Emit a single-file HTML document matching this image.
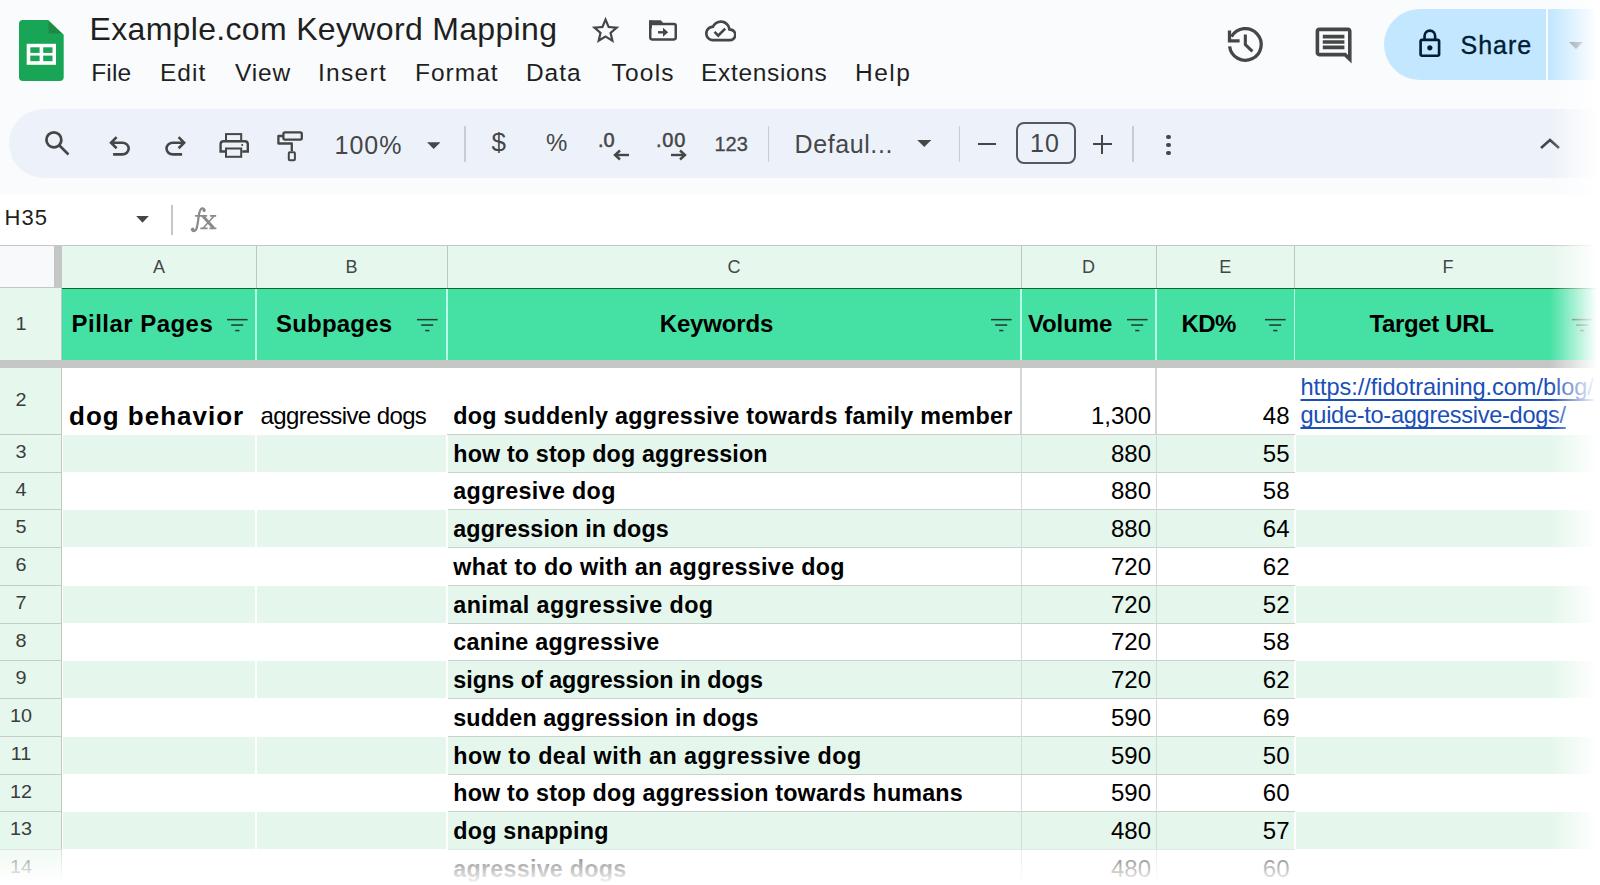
<!DOCTYPE html>
<html><head><meta charset="utf-8"><title>Example.com Keyword Mapping</title>
<style>
html,body{margin:0;padding:0;}
body{width:1600px;height:885px;overflow:hidden;position:relative;background:#f9fbfd;font-family:"Liberation Sans",sans-serif;}
.t{position:absolute;white-space:nowrap;}
.r{position:absolute;display:block;}
</style></head><body>
<svg class="r" style="left:19px;top:20px;" width="45" height="61" viewBox="0 0 45 61"><path d="M4 0H29.3L44.7 14.7V57Q44.7 61 40.7 61H4Q0 61 0 57V4Q0 0 4 0Z" fill="#18a556"/><path d="M29.6 1.5V13.5H43Z" fill="#1c8a40"/><rect x="7.7" y="23.8" width="29.3" height="21" fill="#fff"/><rect x="11.3" y="27.3" width="9.3" height="5.6" fill="#18a556"/><rect x="24.2" y="27.3" width="9.3" height="5.6" fill="#18a556"/><rect x="11.3" y="35.6" width="9.3" height="5.6" fill="#18a556"/><rect x="24.2" y="35.6" width="9.3" height="5.6" fill="#18a556"/></svg>
<div class="t" style="left:89.50px;top:13.11px;font-size:32px;line-height:32px;color:#1f1f1f;font-weight:normal;letter-spacing:0.33px;font-family:'Liberation Sans', sans-serif;">Example.com Keyword Mapping</div>
<svg class="r" style="left:588.7px;top:14px;" width="33.1" height="33.1" viewBox="0 0 24 24"><path fill="#444746" d="M22 9.24l-7.19-.62L12 2 9.19 8.63 2 9.24l5.46 4.73L5.82 21 12 17.27 18.18 21l-1.63-7.03L22 9.24zM12 15.4l-3.76 2.27 1-4.28-3.32-2.88 4.38-.38L12 6.1l1.71 4.04 4.38.38-3.32 2.88 1 4.28L12 15.4z"/></svg>
<svg class="r" style="left:645px;top:14px;" width="36" height="32" viewBox="0 0 36 32"><path fill="#444746" d="M5.5 6.2H15.8L19.8 10.9H5.5Z"/><rect x="5.25" y="9.9" width="25.5" height="15.5" rx="1.8" fill="none" stroke="#444746" stroke-width="2.5"/><rect x="4" y="6.2" width="3" height="8" fill="#444746"/><path d="M13 18.3H20" stroke="#444746" stroke-width="2.4"/><path d="M18 13.8L23.2 18.3L18 22.8Z" fill="#444746"/></svg>
<svg class="r" style="left:704.5px;top:14.6px;" width="31.7" height="31.7" viewBox="0 0 24 24"><path fill="#444746" d="M19.35 10.04C18.67 6.59 15.64 4 12 4 9.11 4 6.6 5.64 5.35 8.04 2.34 8.36 0 10.91 0 14c0 3.31 2.69 6 6 6h13c2.76 0 5-2.24 5-5 0-2.64-2.05-4.78-4.65-4.96zM19 18H6c-2.21 0-4-1.79-4-4 0-2.050 1.53-3.76 3.56-3.970l1.07-.11.5-.95C8.08 7.14 9.94 6 12 6c2.62 0 4.88 1.86 5.39 4.43l.3 1.5 1.53.11c1.56.1 2.78 1.41 2.78 2.96 0 1.65-1.35 3-3 3zm-9-3.82l-2.090-2.090L6.5 13.5 10 17l6.01-6.01-1.41-1.41z"/></svg>
<div class="t" style="left:91.30px;top:60.86px;font-size:24.5px;line-height:24.5px;color:#1f1f1f;font-weight:normal;letter-spacing:0.1px;font-family:'Liberation Sans', sans-serif;">File</div>
<div class="t" style="left:160.00px;top:60.86px;font-size:24.5px;line-height:24.5px;color:#1f1f1f;font-weight:normal;letter-spacing:1.0px;font-family:'Liberation Sans', sans-serif;">Edit</div>
<div class="t" style="left:235.00px;top:60.86px;font-size:24.5px;line-height:24.5px;color:#1f1f1f;font-weight:normal;letter-spacing:0.85px;font-family:'Liberation Sans', sans-serif;">View</div>
<div class="t" style="left:318.00px;top:60.86px;font-size:24.5px;line-height:24.5px;color:#1f1f1f;font-weight:normal;letter-spacing:1.3px;font-family:'Liberation Sans', sans-serif;">Insert</div>
<div class="t" style="left:415.00px;top:60.86px;font-size:24.5px;line-height:24.5px;color:#1f1f1f;font-weight:normal;letter-spacing:1.0px;font-family:'Liberation Sans', sans-serif;">Format</div>
<div class="t" style="left:525.90px;top:60.86px;font-size:24.5px;line-height:24.5px;color:#1f1f1f;font-weight:normal;letter-spacing:1.0px;font-family:'Liberation Sans', sans-serif;">Data</div>
<div class="t" style="left:611.60px;top:60.86px;font-size:24.5px;line-height:24.5px;color:#1f1f1f;font-weight:normal;letter-spacing:1.2px;font-family:'Liberation Sans', sans-serif;">Tools</div>
<div class="t" style="left:701.00px;top:60.86px;font-size:24.5px;line-height:24.5px;color:#1f1f1f;font-weight:normal;letter-spacing:0.67px;font-family:'Liberation Sans', sans-serif;">Extensions</div>
<div class="t" style="left:855.00px;top:60.86px;font-size:24.5px;line-height:24.5px;color:#1f1f1f;font-weight:normal;letter-spacing:1.5px;font-family:'Liberation Sans', sans-serif;">Help</div>
<svg class="r" style="left:1221.65px;top:21.05px;" width="46.7" height="46.7" viewBox="0 0 46.7 46.7"><path d="M7.62 25.4A15.85 15.85 0 1 0 9.6 15.6" fill="none" stroke="#444746" stroke-width="3.3"/><path d="M7.5 9.6V19.9H17.6" fill="none" stroke="#444746" stroke-width="3.3"/><path d="M23.35 13.6V23.6L30.4 30.4" fill="none" stroke="#444746" stroke-width="3.1"/></svg>
<svg class="r" style="left:1312.4px;top:24.4px;" width="43.2" height="43.2" viewBox="0 0 24 24"><path fill="#444746" d="M21.99 4c0-1.1-.89-2-1.99-2H4c-1.1 0-2 .9-2 2v12c0 1.1.9 2 2 2h14l4 4-.01-18zM20 4v13.17L18.83 16H4V4h16zM6 12h12v2H6zm0-3h12v2H6zm0-3h12v2H6z"/></svg>
<div class="r" style="left:1384px;top:9px;width:300px;height:71px;border-radius:35.5px;background:#c2e7ff"></div>
<div class="r" style="left:1546px;top:9px;width:2px;height:71px;background:#f9fbfd;"></div>
<svg class="r" style="left:1414.3px;top:28.2px;" width="31.7" height="31.7" viewBox="0 -960 960 960"><path fill="#001d35" d="M240-80q-33 0-56.5-23.5T160-160v-400q0-33 23.5-56.5T240-640h40v-80q0-83 58.5-141.5T480-920q83 0 141.5 58.5T680-720v80h40q33 0 56.5 23.5T800-560v400q0 33-23.5 56.5T720-80H240Zm0-80h480v-400H240v400Zm240-120q33 0 56.5-23.5T560-360q0-33-23.5-56.5T480-440q-33 0-56.5 23.5T400-360q0 33 23.5 56.5T480-280ZM360-640h240v-80q0-50-35-85t-85-35q-50 0-85 35t-35 85v80ZM240-160v-400 400Z"/></svg>
<div class="t" style="left:1460.50px;top:32.84px;font-size:25px;line-height:25px;color:#001d35;font-weight:normal;letter-spacing:1.0px;font-family:'Liberation Sans', sans-serif;-webkit-text-stroke:0.35px #001d35;">Share</div>
<svg class="r" style="left:1569px;top:42px;" width="14" height="8" viewBox="0 0 14 8"><path d="M0 0H14L7 7Z" fill="#6b7a86"/></svg>
<div class="r" style="left:9px;top:109px;width:1620px;height:69px;border-radius:34.5px;background:#edf2fa"></div>
<svg class="r" style="left:40.9px;top:127.2px;" width="32.5" height="32.5" viewBox="0 -960 960 960"><path fill="#444746" d="M784-120 532-372q-30 24-69 38t-83 14q-109 0-184.5-75.5T120-580q0-109 75.5-184.5T380-840q109 0 184.5 75.5T640-580q0 44-14 83t-38 69l252 252-56 56ZM380-400q75 0 127.5-52.5T560-580q0-75-52.5-127.5T380-760q-75 0-127.5 52.5T200-580q0 75 52.5 127.5T380-400Z"/></svg>
<svg class="r" style="left:103.55px;top:130.5px;" width="31.2" height="31.2" viewBox="0 -960 960 960"><path fill="#444746" d="M280-200v-80h284q63 0 109.5-40T720-420q0-60-46.5-100T564-560H312l104 104-56 56-200-200 200-200 56 56-104 104h252q97 0 166.5 63T800-420q0 94-69.5 157T564-200H280Z"/></svg>
<svg class="r" style="left:159.8px;top:130.5px;" width="31.2" height="31.2" viewBox="0 -960 960 960"><path fill="#444746" d="M396-200q-97 0-166.5-63T160-420q0-94 69.5-157T396-640h252L544-744l56-56 200 200-200 200-56-56 104-104H396q-63 0-109.5 40T240-420q0 60 46.5 100T396-280h284v80H396Z"/></svg>
<svg class="r" style="left:210px;top:120px;" width="50" height="50" viewBox="0 0 50 50"><rect x="16" y="14.1" width="15.2" height="7" fill="none" stroke="#444746" stroke-width="2"/><path d="M16 31.5H10.6V24.3Q10.6 21.3 13.6 21.3H34.8Q37.8 21.3 37.8 24.3V31.5H32.2" fill="none" stroke="#444746" stroke-width="2.4"/><rect x="16" y="28.5" width="15.2" height="8.3" fill="none" stroke="#444746" stroke-width="2"/><circle cx="32.2" cy="25" r="1.1" fill="#444746"/></svg>
<svg class="r" style="left:270px;top:125px;" width="40" height="40" viewBox="0 0 40 40"><rect x="13.4" y="7.4" width="18.4" height="7.2" rx="1.5" fill="none" stroke="#444746" stroke-width="2.3"/><path d="M13.4 11H8.4V18.5H21.8V26" fill="none" stroke="#444746" stroke-width="2.3" stroke-linejoin="round"/><rect x="18.8" y="27.2" width="6.1" height="8.1" rx="1" fill="none" stroke="#444746" stroke-width="2"/></svg>
<div class="t" style="left:334.50px;top:133.24px;font-size:25px;line-height:25px;color:#444746;font-weight:normal;letter-spacing:1.0px;font-family:'Liberation Sans', sans-serif;">100%</div>
<svg class="r" style="left:426.6px;top:141.5px;" width="13.4" height="7.3" viewBox="0 0 14 7"><path d="M0 0H14L7 7Z" fill="#444746"/></svg>
<div class="r" style="left:464px;top:126px;width:1.5px;height:36px;background:#c7cdd3;"></div>
<div class="t" style="left:491.50px;top:129.49px;font-size:26px;line-height:26px;color:#444746;font-weight:normal;letter-spacing:0px;font-family:'Liberation Sans', sans-serif;">$</div>
<div class="t" style="left:546.00px;top:131.18px;font-size:24px;line-height:24px;color:#444746;font-weight:normal;letter-spacing:0px;font-family:'Liberation Sans', sans-serif;">%</div>
<div class="t" style="left:598.00px;top:129.77px;font-size:20px;line-height:20px;color:#444746;font-weight:normal;letter-spacing:0px;font-family:'Liberation Sans', sans-serif;-webkit-text-stroke:0.5px #444746;">.0</div>
<svg class="r" style="left:612px;top:149px;" width="18" height="12" viewBox="0 0 18 12"><path d="M5 6H17" stroke="#444746" stroke-width="2.4"/><path d="M8 1.5L3 6L8 10.5" fill="none" stroke="#444746" stroke-width="2.4"/></svg>
<div class="t" style="left:656.00px;top:129.77px;font-size:20px;line-height:20px;color:#444746;font-weight:normal;letter-spacing:0.8px;font-family:'Liberation Sans', sans-serif;-webkit-text-stroke:0.5px #444746;">.00</div>
<svg class="r" style="left:670px;top:149px;" width="18" height="12" viewBox="0 0 18 12"><path d="M1 6H13" stroke="#444746" stroke-width="2.4"/><path d="M10 1.5L15 6L10 10.5" fill="none" stroke="#444746" stroke-width="2.4"/></svg>
<div class="t" style="left:714.50px;top:133.57px;font-size:20px;line-height:20px;color:#444746;font-weight:normal;letter-spacing:0px;font-family:'Liberation Sans', sans-serif;-webkit-text-stroke:0.3px #444746;">123</div>
<div class="r" style="left:767.5px;top:126px;width:1.5px;height:36px;background:#c7cdd3;"></div>
<div class="t" style="left:794.50px;top:131.64px;font-size:25px;line-height:25px;color:#444746;font-weight:normal;letter-spacing:0.6px;font-family:'Liberation Sans', sans-serif;">Defaul...</div>
<svg class="r" style="left:916.5px;top:140px;" width="14.5" height="7" viewBox="0 0 14 7"><path d="M0 0H14L7 7Z" fill="#444746"/></svg>
<div class="r" style="left:958.5px;top:126px;width:1.5px;height:36px;background:#c7cdd3;"></div>
<div class="r" style="left:978px;top:142.8px;width:18px;height:2.4px;background:#444746;"></div>
<div class="r" style="left:1015.5px;top:122.3px;width:60.5px;height:42px;box-sizing:border-box;border:2px solid #55595c;border-radius:8px"></div>
<div class="t" style="left:1030.00px;top:130.84px;font-size:25px;line-height:25px;color:#444746;font-weight:normal;letter-spacing:1.2px;font-family:'Liberation Sans', sans-serif;">10</div>
<div class="r" style="left:1092.5px;top:142.8px;width:19px;height:2.4px;background:#444746;"></div>
<div class="r" style="left:1100.8px;top:134.5px;width:2.4px;height:19px;background:#444746;"></div>
<div class="r" style="left:1132.3px;top:126px;width:1.5px;height:36px;background:#c7cdd3;"></div>
<div class="r" style="left:1166.2px;top:134.9px;width:4.6px;height:4.6px;border-radius:50%;background:#444746"></div>
<div class="r" style="left:1166.2px;top:142.9px;width:4.6px;height:4.6px;border-radius:50%;background:#444746"></div>
<div class="r" style="left:1166.2px;top:150.9px;width:4.6px;height:4.6px;border-radius:50%;background:#444746"></div>
<svg class="r" style="left:1538px;top:136px;" width="24" height="16" viewBox="0 0 24 16"><path d="M3 12L12 4L21 12" fill="none" stroke="#444746" stroke-width="2.6"/></svg>
<div class="r" style="left:0px;top:195px;width:1600px;height:50px;background:#ffffff;"></div>
<div class="t" style="left:4.50px;top:206.98px;font-size:22px;line-height:22px;color:#1f1f1f;font-weight:normal;letter-spacing:1.1px;font-family:'Liberation Sans', sans-serif;">H35</div>
<svg class="r" style="left:135.7px;top:215.9px;" width="13" height="6.8" viewBox="0 0 13 7"><path d="M0 0H13L6.5 7Z" fill="#444746"/></svg>
<div class="r" style="left:171px;top:205px;width:1.5px;height:30px;background:#c7c7c7;"></div>
<svg class="r" style="left:180px;top:200px;" width="50" height="40" viewBox="0 0 50 40"><path d="M11.8 29.6Q13.6 32.6 16 29.8Q17.2 28 18.6 17Q19.6 9.5 21.6 8.6Q23.6 7.8 24.6 10" fill="none" stroke="#8a8a8a" stroke-width="2.2" stroke-linecap="round"/><circle cx="12.8" cy="29.2" r="1.6" fill="#8a8a8a"/><circle cx="24" cy="10.6" r="1.5" fill="#8a8a8a"/><path d="M15.1 15.8H27.1M30 15.8H36.2M20.3 28.3H27.6M29.4 28.3H36.4" stroke="#8a8a8a" stroke-width="1.7"/><path d="M22.6 15.8L33.8 28.3" stroke="#8a8a8a" stroke-width="3"/><path d="M34.3 15.8L23 28.3" stroke="#8a8a8a" stroke-width="1.6"/></svg>
<div class="r" style="left:0px;top:245px;width:1600px;height:1px;background:#c4c7c5;"></div>
<div class="r" style="left:0px;top:246px;width:54px;height:42px;background:#f8f9fb;"></div>
<div class="r" style="left:54px;top:246px;width:8px;height:42px;background:#c4c7c5;"></div>
<div class="r" style="left:62px;top:246px;width:1540px;height:42px;background:#e6f7ed;"></div>
<div class="t" style="left:-141.00px;width:600px;text-align:center;top:257.51px;font-size:18px;line-height:18px;color:#444746;font-weight:normal;letter-spacing:0px;font-family:'Liberation Sans', sans-serif;">A</div>
<div class="r" style="left:255.5px;top:246px;width:1px;height:42px;background:#c0c6c2;"></div>
<div class="t" style="left:51.50px;width:600px;text-align:center;top:257.51px;font-size:18px;line-height:18px;color:#444746;font-weight:normal;letter-spacing:0px;font-family:'Liberation Sans', sans-serif;">B</div>
<div class="r" style="left:446.5px;top:246px;width:1px;height:42px;background:#c0c6c2;"></div>
<div class="t" style="left:434.00px;width:600px;text-align:center;top:257.51px;font-size:18px;line-height:18px;color:#444746;font-weight:normal;letter-spacing:0px;font-family:'Liberation Sans', sans-serif;">C</div>
<div class="r" style="left:1020.5px;top:246px;width:1px;height:42px;background:#c0c6c2;"></div>
<div class="t" style="left:788.50px;width:600px;text-align:center;top:257.51px;font-size:18px;line-height:18px;color:#444746;font-weight:normal;letter-spacing:0px;font-family:'Liberation Sans', sans-serif;">D</div>
<div class="r" style="left:1155.5px;top:246px;width:1px;height:42px;background:#c0c6c2;"></div>
<div class="t" style="left:925.35px;width:600px;text-align:center;top:257.51px;font-size:18px;line-height:18px;color:#444746;font-weight:normal;letter-spacing:0px;font-family:'Liberation Sans', sans-serif;">E</div>
<div class="r" style="left:1294.2px;top:246px;width:1px;height:42px;background:#c0c6c2;"></div>
<div class="t" style="left:1148.00px;width:600px;text-align:center;top:257.51px;font-size:18px;line-height:18px;color:#444746;font-weight:normal;letter-spacing:0px;font-family:'Liberation Sans', sans-serif;">F</div>
<div class="r" style="left:0px;top:287px;width:54px;height:1px;background:#c4c7c5;"></div>
<div class="r" style="left:0px;top:288px;width:61px;height:600px;background:#e6f7ed;"></div>
<div class="r" style="left:61px;top:368px;width:1.5px;height:600px;background:#c3c8c5;"></div>
<div class="r" style="left:61px;top:288px;width:1.5px;height:72px;background:#c3c8c5;"></div>
<div class="r" style="left:62px;top:288px;width:1540px;height:71.5px;background:#45e1a4;"></div>
<div class="r" style="left:62px;top:287.5px;width:1540px;height:1.6px;background:#0b6b1f;"></div>
<div class="r" style="left:255.2px;top:289px;width:1.6px;height:70.5px;background:#b8fbe6;"></div>
<div class="r" style="left:446.2px;top:289px;width:1.6px;height:70.5px;background:#b8fbe6;"></div>
<div class="r" style="left:1020.2px;top:289px;width:1.6px;height:70.5px;background:#b8fbe6;"></div>
<div class="r" style="left:1155.2px;top:289px;width:1.6px;height:70.5px;background:#b8fbe6;"></div>
<div class="r" style="left:1293.9px;top:289px;width:1.6px;height:70.5px;background:#b8fbe6;"></div>
<div class="t" style="left:-279.40px;width:600px;text-align:center;top:314.84px;font-size:18.5px;line-height:18.5px;color:#3a3d3c;font-weight:normal;letter-spacing:0px;font-family:'Liberation Sans', sans-serif;transform:scaleX(1.07);">1</div>
<div class="t" style="left:71.60px;top:311.58px;font-size:24px;line-height:24px;color:#000000;font-weight:bold;letter-spacing:0.46px;font-family:'Liberation Sans', sans-serif;">Pillar Pages</div>
<div class="t" style="left:276.00px;top:311.58px;font-size:24px;line-height:24px;color:#000000;font-weight:bold;letter-spacing:0.2px;font-family:'Liberation Sans', sans-serif;">Subpages</div>
<div class="t" style="left:659.75px;top:311.58px;font-size:24px;line-height:24px;color:#000000;font-weight:bold;letter-spacing:-0.16px;font-family:'Liberation Sans', sans-serif;">Keywords</div>
<div class="t" style="left:1027.90px;top:311.58px;font-size:24px;line-height:24px;color:#000000;font-weight:bold;letter-spacing:-0.1px;font-family:'Liberation Sans', sans-serif;">Volume</div>
<div class="t" style="left:1181.50px;top:311.58px;font-size:24px;line-height:24px;color:#000000;font-weight:bold;letter-spacing:-0.57px;font-family:'Liberation Sans', sans-serif;">KD%</div>
<div class="t" style="left:1369.50px;top:311.58px;font-size:24px;line-height:24px;color:#000000;font-weight:bold;letter-spacing:-0.35px;font-family:'Liberation Sans', sans-serif;">Target URL</div>
<svg class="r" style="left:226.9px;top:318px;" width="21" height="14" viewBox="0 0 21 14"><rect x="0" y="0.9" width="20.6" height="1.5" fill="#1f3a2c"/><rect x="4.2" y="6.3" width="12" height="1.5" fill="#1f3a2c"/><rect x="8.2" y="11.8" width="4.2" height="1.5" fill="#1f3a2c"/></svg>
<svg class="r" style="left:416.9px;top:318px;" width="21" height="14" viewBox="0 0 21 14"><rect x="0" y="0.9" width="20.6" height="1.5" fill="#1f3a2c"/><rect x="4.2" y="6.3" width="12" height="1.5" fill="#1f3a2c"/><rect x="8.2" y="11.8" width="4.2" height="1.5" fill="#1f3a2c"/></svg>
<svg class="r" style="left:991px;top:318px;" width="21" height="14" viewBox="0 0 21 14"><rect x="0" y="0.9" width="20.6" height="1.5" fill="#1f3a2c"/><rect x="4.2" y="6.3" width="12" height="1.5" fill="#1f3a2c"/><rect x="8.2" y="11.8" width="4.2" height="1.5" fill="#1f3a2c"/></svg>
<svg class="r" style="left:1126.9px;top:318px;" width="21" height="14" viewBox="0 0 21 14"><rect x="0" y="0.9" width="20.6" height="1.5" fill="#1f3a2c"/><rect x="4.2" y="6.3" width="12" height="1.5" fill="#1f3a2c"/><rect x="8.2" y="11.8" width="4.2" height="1.5" fill="#1f3a2c"/></svg>
<svg class="r" style="left:1264.7px;top:318px;" width="21" height="14" viewBox="0 0 21 14"><rect x="0" y="0.9" width="20.6" height="1.5" fill="#1f3a2c"/><rect x="4.2" y="6.3" width="12" height="1.5" fill="#1f3a2c"/><rect x="8.2" y="11.8" width="4.2" height="1.5" fill="#1f3a2c"/></svg>
<svg class="r" style="left:1572px;top:318px;" width="21" height="14" viewBox="0 0 21 14"><rect x="0" y="0.9" width="20.6" height="1.5" fill="#1f3a2c"/><rect x="4.2" y="6.3" width="12" height="1.5" fill="#1f3a2c"/><rect x="8.2" y="11.8" width="4.2" height="1.5" fill="#1f3a2c"/></svg>
<div class="r" style="left:0px;top:359.5px;width:1600px;height:8px;background:#c4c7c5;"></div>
<div class="r" style="left:62px;top:367.5px;width:1600px;height:520px;background:#ffffff;"></div>
<div class="r" style="left:62.5px;top:367.5px;width:1540px;height:66.5px;background:#ffffff;"></div>
<div class="t" style="left:-279.40px;width:600px;text-align:center;top:390.84px;font-size:18.5px;line-height:18.5px;color:#3a3d3c;font-weight:normal;letter-spacing:0px;font-family:'Liberation Sans', sans-serif;transform:scaleX(1.07);">2</div>
<div class="t" style="left:69.00px;top:403.09px;font-size:26px;line-height:26px;color:#000;font-weight:bold;letter-spacing:1.0px;font-family:'Liberation Sans', sans-serif;">dog behavior</div>
<div class="t" style="left:260.50px;top:403.88px;font-size:24px;line-height:24px;color:#000;font-weight:normal;letter-spacing:-0.6px;font-family:'Liberation Sans', sans-serif;">aggressive dogs</div>
<div class="t" style="left:453.30px;top:404.68px;font-size:23.3px;line-height:23.3px;color:#000;font-weight:bold;letter-spacing:0.287px;font-family:'Liberation Sans', sans-serif;">dog suddenly aggressive towards family member</div>
<div class="t" style="right:449.00px;top:403.88px;font-size:24px;line-height:24px;color:#000;font-weight:normal;letter-spacing:0px;font-family:'Liberation Sans', sans-serif;">1,300</div>
<div class="t" style="right:310.50px;top:403.88px;font-size:24px;line-height:24px;color:#000;font-weight:normal;letter-spacing:0px;font-family:'Liberation Sans', sans-serif;">48</div>
<div class="t" style="left:1300.50px;top:375.62px;font-size:23.6px;line-height:23.6px;color:#1a4fb8;font-weight:normal;letter-spacing:-0.06px;font-family:'Liberation Sans', sans-serif;text-decoration:underline;text-decoration-skip-ink:none;text-decoration-thickness:1.5px;text-underline-offset:4px;">https://fidotraining.com/blog/</div>
<div class="t" style="left:1300.50px;top:403.92px;font-size:23.6px;line-height:23.6px;color:#1a4fb8;font-weight:normal;letter-spacing:-0.3px;font-family:'Liberation Sans', sans-serif;text-decoration:underline;text-decoration-skip-ink:none;text-decoration-thickness:1.5px;text-underline-offset:4px;">guide-to-aggressive-dogs/</div>
<div class="r" style="left:447px;top:433.5px;width:847.7px;height:1.5px;background:#c8cdca;"></div>
<div class="r" style="left:1020.3px;top:367.5px;width:1.5px;height:66.5px;background:#d2d6d4;"></div>
<div class="r" style="left:1155.3px;top:367.5px;width:1.5px;height:66.5px;background:#d2d6d4;"></div>
<div class="r" style="left:0px;top:433.5px;width:61px;height:1.5px;background:#c3c8c5;"></div>
<div class="r" style="left:63px;top:435px;width:192px;height:37px;background:#e5f7ec;"></div>
<div class="r" style="left:257px;top:435px;width:189px;height:37px;background:#e5f7ec;"></div>
<div class="r" style="left:448px;top:435px;width:846px;height:37px;background:#e5f7ec;"></div>
<div class="r" style="left:1296px;top:435px;width:400px;height:37px;background:#e5f7ec;"></div>
<div class="r" style="left:447.5px;top:471.5px;width:847px;height:1.5px;background:#c9d2cd;"></div>
<div class="r" style="left:1020.5px;top:434px;width:1.5px;height:38px;background:#d6dad8;"></div>
<div class="r" style="left:1155.5px;top:434px;width:1.5px;height:38px;background:#d6dad8;"></div>
<div class="r" style="left:0px;top:471.5px;width:61px;height:1.5px;background:#c6ccc8;"></div>
<div class="t" style="left:-279.40px;width:600px;text-align:center;top:443.14px;font-size:18.5px;line-height:18.5px;color:#3a3d3c;font-weight:normal;letter-spacing:0px;font-family:'Liberation Sans', sans-serif;transform:scaleX(1.07);">3</div>
<div class="t" style="left:453.30px;top:442.98px;font-size:23.3px;line-height:23.3px;color:#000;font-weight:bold;letter-spacing:0.146px;font-family:'Liberation Sans', sans-serif;">how to stop dog aggression</div>
<div class="t" style="right:449.00px;top:442.38px;font-size:24px;line-height:24px;color:#000;font-weight:normal;letter-spacing:0px;font-family:'Liberation Sans', sans-serif;">880</div>
<div class="t" style="right:310.50px;top:442.38px;font-size:24px;line-height:24px;color:#000;font-weight:normal;letter-spacing:0px;font-family:'Liberation Sans', sans-serif;">55</div>
<div class="r" style="left:447.5px;top:508.5px;width:847px;height:1.5px;background:#c9d2cd;"></div>
<div class="r" style="left:1020.5px;top:472px;width:1.5px;height:37px;background:#d6dad8;"></div>
<div class="r" style="left:1155.5px;top:472px;width:1.5px;height:37px;background:#d6dad8;"></div>
<div class="r" style="left:0px;top:508.5px;width:61px;height:1.5px;background:#c6ccc8;"></div>
<div class="t" style="left:-279.40px;width:600px;text-align:center;top:480.64px;font-size:18.5px;line-height:18.5px;color:#3a3d3c;font-weight:normal;letter-spacing:0px;font-family:'Liberation Sans', sans-serif;transform:scaleX(1.07);">4</div>
<div class="t" style="left:453.30px;top:479.98px;font-size:23.3px;line-height:23.3px;color:#000;font-weight:bold;letter-spacing:0.347px;font-family:'Liberation Sans', sans-serif;">aggresive dog</div>
<div class="t" style="right:449.00px;top:479.38px;font-size:24px;line-height:24px;color:#000;font-weight:normal;letter-spacing:0px;font-family:'Liberation Sans', sans-serif;">880</div>
<div class="t" style="right:310.50px;top:479.38px;font-size:24px;line-height:24px;color:#000;font-weight:normal;letter-spacing:0px;font-family:'Liberation Sans', sans-serif;">58</div>
<div class="r" style="left:63px;top:510px;width:192px;height:37px;background:#e5f7ec;"></div>
<div class="r" style="left:257px;top:510px;width:189px;height:37px;background:#e5f7ec;"></div>
<div class="r" style="left:448px;top:510px;width:846px;height:37px;background:#e5f7ec;"></div>
<div class="r" style="left:1296px;top:510px;width:400px;height:37px;background:#e5f7ec;"></div>
<div class="r" style="left:447.5px;top:546.5px;width:847px;height:1.5px;background:#c9d2cd;"></div>
<div class="r" style="left:1020.5px;top:509px;width:1.5px;height:38px;background:#d6dad8;"></div>
<div class="r" style="left:1155.5px;top:509px;width:1.5px;height:38px;background:#d6dad8;"></div>
<div class="r" style="left:0px;top:546.5px;width:61px;height:1.5px;background:#c6ccc8;"></div>
<div class="t" style="left:-279.40px;width:600px;text-align:center;top:518.14px;font-size:18.5px;line-height:18.5px;color:#3a3d3c;font-weight:normal;letter-spacing:0px;font-family:'Liberation Sans', sans-serif;transform:scaleX(1.07);">5</div>
<div class="t" style="left:453.30px;top:517.98px;font-size:23.3px;line-height:23.3px;color:#000;font-weight:bold;letter-spacing:0.106px;font-family:'Liberation Sans', sans-serif;">aggression in dogs</div>
<div class="t" style="right:449.00px;top:517.38px;font-size:24px;line-height:24px;color:#000;font-weight:normal;letter-spacing:0px;font-family:'Liberation Sans', sans-serif;">880</div>
<div class="t" style="right:310.50px;top:517.38px;font-size:24px;line-height:24px;color:#000;font-weight:normal;letter-spacing:0px;font-family:'Liberation Sans', sans-serif;">64</div>
<div class="r" style="left:447.5px;top:584.5px;width:847px;height:1.5px;background:#c9d2cd;"></div>
<div class="r" style="left:1020.5px;top:547px;width:1.5px;height:38px;background:#d6dad8;"></div>
<div class="r" style="left:1155.5px;top:547px;width:1.5px;height:38px;background:#d6dad8;"></div>
<div class="r" style="left:0px;top:584.5px;width:61px;height:1.5px;background:#c6ccc8;"></div>
<div class="t" style="left:-279.40px;width:600px;text-align:center;top:556.14px;font-size:18.5px;line-height:18.5px;color:#3a3d3c;font-weight:normal;letter-spacing:0px;font-family:'Liberation Sans', sans-serif;transform:scaleX(1.07);">6</div>
<div class="t" style="left:453.30px;top:555.98px;font-size:23.3px;line-height:23.3px;color:#000;font-weight:bold;letter-spacing:0.336px;font-family:'Liberation Sans', sans-serif;">what to do with an aggressive dog</div>
<div class="t" style="right:449.00px;top:555.38px;font-size:24px;line-height:24px;color:#000;font-weight:normal;letter-spacing:0px;font-family:'Liberation Sans', sans-serif;">720</div>
<div class="t" style="right:310.50px;top:555.38px;font-size:24px;line-height:24px;color:#000;font-weight:normal;letter-spacing:0px;font-family:'Liberation Sans', sans-serif;">62</div>
<div class="r" style="left:63px;top:586px;width:192px;height:37px;background:#e5f7ec;"></div>
<div class="r" style="left:257px;top:586px;width:189px;height:37px;background:#e5f7ec;"></div>
<div class="r" style="left:448px;top:586px;width:846px;height:37px;background:#e5f7ec;"></div>
<div class="r" style="left:1296px;top:586px;width:400px;height:37px;background:#e5f7ec;"></div>
<div class="r" style="left:447.5px;top:622.5px;width:847px;height:1.5px;background:#c9d2cd;"></div>
<div class="r" style="left:1020.5px;top:585px;width:1.5px;height:38px;background:#d6dad8;"></div>
<div class="r" style="left:1155.5px;top:585px;width:1.5px;height:38px;background:#d6dad8;"></div>
<div class="r" style="left:0px;top:622.5px;width:61px;height:1.5px;background:#c6ccc8;"></div>
<div class="t" style="left:-279.40px;width:600px;text-align:center;top:594.14px;font-size:18.5px;line-height:18.5px;color:#3a3d3c;font-weight:normal;letter-spacing:0px;font-family:'Liberation Sans', sans-serif;transform:scaleX(1.07);">7</div>
<div class="t" style="left:453.30px;top:593.98px;font-size:23.3px;line-height:23.3px;color:#000;font-weight:bold;letter-spacing:0.43px;font-family:'Liberation Sans', sans-serif;">animal aggressive dog</div>
<div class="t" style="right:449.00px;top:593.38px;font-size:24px;line-height:24px;color:#000;font-weight:normal;letter-spacing:0px;font-family:'Liberation Sans', sans-serif;">720</div>
<div class="t" style="right:310.50px;top:593.38px;font-size:24px;line-height:24px;color:#000;font-weight:normal;letter-spacing:0px;font-family:'Liberation Sans', sans-serif;">52</div>
<div class="r" style="left:447.5px;top:659.5px;width:847px;height:1.5px;background:#c9d2cd;"></div>
<div class="r" style="left:1020.5px;top:623px;width:1.5px;height:37px;background:#d6dad8;"></div>
<div class="r" style="left:1155.5px;top:623px;width:1.5px;height:37px;background:#d6dad8;"></div>
<div class="r" style="left:0px;top:659.5px;width:61px;height:1.5px;background:#c6ccc8;"></div>
<div class="t" style="left:-279.40px;width:600px;text-align:center;top:631.64px;font-size:18.5px;line-height:18.5px;color:#3a3d3c;font-weight:normal;letter-spacing:0px;font-family:'Liberation Sans', sans-serif;transform:scaleX(1.07);">8</div>
<div class="t" style="left:453.30px;top:630.98px;font-size:23.3px;line-height:23.3px;color:#000;font-weight:bold;letter-spacing:0.242px;font-family:'Liberation Sans', sans-serif;">canine aggressive</div>
<div class="t" style="right:449.00px;top:630.38px;font-size:24px;line-height:24px;color:#000;font-weight:normal;letter-spacing:0px;font-family:'Liberation Sans', sans-serif;">720</div>
<div class="t" style="right:310.50px;top:630.38px;font-size:24px;line-height:24px;color:#000;font-weight:normal;letter-spacing:0px;font-family:'Liberation Sans', sans-serif;">58</div>
<div class="r" style="left:63px;top:661px;width:192px;height:37px;background:#e5f7ec;"></div>
<div class="r" style="left:257px;top:661px;width:189px;height:37px;background:#e5f7ec;"></div>
<div class="r" style="left:448px;top:661px;width:846px;height:37px;background:#e5f7ec;"></div>
<div class="r" style="left:1296px;top:661px;width:400px;height:37px;background:#e5f7ec;"></div>
<div class="r" style="left:447.5px;top:697.5px;width:847px;height:1.5px;background:#c9d2cd;"></div>
<div class="r" style="left:1020.5px;top:660px;width:1.5px;height:38px;background:#d6dad8;"></div>
<div class="r" style="left:1155.5px;top:660px;width:1.5px;height:38px;background:#d6dad8;"></div>
<div class="r" style="left:0px;top:697.5px;width:61px;height:1.5px;background:#c6ccc8;"></div>
<div class="t" style="left:-279.40px;width:600px;text-align:center;top:669.14px;font-size:18.5px;line-height:18.5px;color:#3a3d3c;font-weight:normal;letter-spacing:0px;font-family:'Liberation Sans', sans-serif;transform:scaleX(1.07);">9</div>
<div class="t" style="left:453.30px;top:668.98px;font-size:23.3px;line-height:23.3px;color:#000;font-weight:bold;letter-spacing:0.007px;font-family:'Liberation Sans', sans-serif;">signs of aggression in dogs</div>
<div class="t" style="right:449.00px;top:668.38px;font-size:24px;line-height:24px;color:#000;font-weight:normal;letter-spacing:0px;font-family:'Liberation Sans', sans-serif;">720</div>
<div class="t" style="right:310.50px;top:668.38px;font-size:24px;line-height:24px;color:#000;font-weight:normal;letter-spacing:0px;font-family:'Liberation Sans', sans-serif;">62</div>
<div class="r" style="left:447.5px;top:735.5px;width:847px;height:1.5px;background:#c9d2cd;"></div>
<div class="r" style="left:1020.5px;top:698px;width:1.5px;height:38px;background:#d6dad8;"></div>
<div class="r" style="left:1155.5px;top:698px;width:1.5px;height:38px;background:#d6dad8;"></div>
<div class="r" style="left:0px;top:735.5px;width:61px;height:1.5px;background:#c6ccc8;"></div>
<div class="t" style="left:-279.40px;width:600px;text-align:center;top:707.14px;font-size:18.5px;line-height:18.5px;color:#3a3d3c;font-weight:normal;letter-spacing:0px;font-family:'Liberation Sans', sans-serif;transform:scaleX(1.07);">10</div>
<div class="t" style="left:453.30px;top:706.98px;font-size:23.3px;line-height:23.3px;color:#000;font-weight:bold;letter-spacing:0.096px;font-family:'Liberation Sans', sans-serif;">sudden aggression in dogs</div>
<div class="t" style="right:449.00px;top:706.38px;font-size:24px;line-height:24px;color:#000;font-weight:normal;letter-spacing:0px;font-family:'Liberation Sans', sans-serif;">590</div>
<div class="t" style="right:310.50px;top:706.38px;font-size:24px;line-height:24px;color:#000;font-weight:normal;letter-spacing:0px;font-family:'Liberation Sans', sans-serif;">69</div>
<div class="r" style="left:63px;top:737px;width:192px;height:37px;background:#e5f7ec;"></div>
<div class="r" style="left:257px;top:737px;width:189px;height:37px;background:#e5f7ec;"></div>
<div class="r" style="left:448px;top:737px;width:846px;height:37px;background:#e5f7ec;"></div>
<div class="r" style="left:1296px;top:737px;width:400px;height:37px;background:#e5f7ec;"></div>
<div class="r" style="left:447.5px;top:773.5px;width:847px;height:1.5px;background:#c9d2cd;"></div>
<div class="r" style="left:1020.5px;top:736px;width:1.5px;height:38px;background:#d6dad8;"></div>
<div class="r" style="left:1155.5px;top:736px;width:1.5px;height:38px;background:#d6dad8;"></div>
<div class="r" style="left:0px;top:773.5px;width:61px;height:1.5px;background:#c6ccc8;"></div>
<div class="t" style="left:-279.40px;width:600px;text-align:center;top:745.14px;font-size:18.5px;line-height:18.5px;color:#3a3d3c;font-weight:normal;letter-spacing:0px;font-family:'Liberation Sans', sans-serif;transform:scaleX(1.07);">11</div>
<div class="t" style="left:453.30px;top:744.98px;font-size:23.3px;line-height:23.3px;color:#000;font-weight:bold;letter-spacing:0.475px;font-family:'Liberation Sans', sans-serif;">how to deal with an aggressive dog</div>
<div class="t" style="right:449.00px;top:744.38px;font-size:24px;line-height:24px;color:#000;font-weight:normal;letter-spacing:0px;font-family:'Liberation Sans', sans-serif;">590</div>
<div class="t" style="right:310.50px;top:744.38px;font-size:24px;line-height:24px;color:#000;font-weight:normal;letter-spacing:0px;font-family:'Liberation Sans', sans-serif;">50</div>
<div class="r" style="left:447.5px;top:810.5px;width:847px;height:1.5px;background:#c9d2cd;"></div>
<div class="r" style="left:1020.5px;top:774px;width:1.5px;height:37px;background:#d6dad8;"></div>
<div class="r" style="left:1155.5px;top:774px;width:1.5px;height:37px;background:#d6dad8;"></div>
<div class="r" style="left:0px;top:810.5px;width:61px;height:1.5px;background:#c6ccc8;"></div>
<div class="t" style="left:-279.40px;width:600px;text-align:center;top:782.64px;font-size:18.5px;line-height:18.5px;color:#3a3d3c;font-weight:normal;letter-spacing:0px;font-family:'Liberation Sans', sans-serif;transform:scaleX(1.07);">12</div>
<div class="t" style="left:453.30px;top:781.98px;font-size:23.3px;line-height:23.3px;color:#000;font-weight:bold;letter-spacing:0.18px;font-family:'Liberation Sans', sans-serif;">how to stop dog aggression towards humans</div>
<div class="t" style="right:449.00px;top:781.38px;font-size:24px;line-height:24px;color:#000;font-weight:normal;letter-spacing:0px;font-family:'Liberation Sans', sans-serif;">590</div>
<div class="t" style="right:310.50px;top:781.38px;font-size:24px;line-height:24px;color:#000;font-weight:normal;letter-spacing:0px;font-family:'Liberation Sans', sans-serif;">60</div>
<div class="r" style="left:63px;top:812px;width:192px;height:37px;background:#e5f7ec;"></div>
<div class="r" style="left:257px;top:812px;width:189px;height:37px;background:#e5f7ec;"></div>
<div class="r" style="left:448px;top:812px;width:846px;height:37px;background:#e5f7ec;"></div>
<div class="r" style="left:1296px;top:812px;width:400px;height:37px;background:#e5f7ec;"></div>
<div class="r" style="left:447.5px;top:848.5px;width:847px;height:1.5px;background:#c9d2cd;"></div>
<div class="r" style="left:1020.5px;top:811px;width:1.5px;height:38px;background:#d6dad8;"></div>
<div class="r" style="left:1155.5px;top:811px;width:1.5px;height:38px;background:#d6dad8;"></div>
<div class="r" style="left:0px;top:848.5px;width:61px;height:1.5px;background:#c6ccc8;"></div>
<div class="t" style="left:-279.40px;width:600px;text-align:center;top:820.14px;font-size:18.5px;line-height:18.5px;color:#3a3d3c;font-weight:normal;letter-spacing:0px;font-family:'Liberation Sans', sans-serif;transform:scaleX(1.07);">13</div>
<div class="t" style="left:453.30px;top:819.98px;font-size:23.3px;line-height:23.3px;color:#000;font-weight:bold;letter-spacing:0.221px;font-family:'Liberation Sans', sans-serif;">dog snapping</div>
<div class="t" style="right:449.00px;top:819.38px;font-size:24px;line-height:24px;color:#000;font-weight:normal;letter-spacing:0px;font-family:'Liberation Sans', sans-serif;">480</div>
<div class="t" style="right:310.50px;top:819.38px;font-size:24px;line-height:24px;color:#000;font-weight:normal;letter-spacing:0px;font-family:'Liberation Sans', sans-serif;">57</div>
<div class="r" style="left:447.5px;top:886.5px;width:847px;height:1.5px;background:#c9d2cd;"></div>
<div class="r" style="left:1020.5px;top:849px;width:1.5px;height:38px;background:#d6dad8;"></div>
<div class="r" style="left:1155.5px;top:849px;width:1.5px;height:38px;background:#d6dad8;"></div>
<div class="r" style="left:0px;top:886.5px;width:61px;height:1.5px;background:#c6ccc8;"></div>
<div class="t" style="left:-279.40px;width:600px;text-align:center;top:858.14px;font-size:18.5px;line-height:18.5px;color:#3a3d3c;font-weight:normal;letter-spacing:0px;font-family:'Liberation Sans', sans-serif;transform:scaleX(1.07);">14</div>
<div class="t" style="left:453.30px;top:857.98px;font-size:23.3px;line-height:23.3px;color:#000;font-weight:bold;letter-spacing:0.25px;font-family:'Liberation Sans', sans-serif;">agressive dogs</div>
<div class="t" style="right:449.00px;top:857.38px;font-size:24px;line-height:24px;color:#000;font-weight:normal;letter-spacing:0px;font-family:'Liberation Sans', sans-serif;">480</div>
<div class="t" style="right:310.50px;top:857.38px;font-size:24px;line-height:24px;color:#000;font-weight:normal;letter-spacing:0px;font-family:'Liberation Sans', sans-serif;">60</div>
<div class="r" style="left:1550px;top:0;width:50px;height:885px;background:linear-gradient(to right, rgba(255,255,255,0) 0%, rgba(255,255,255,1) 94%)"></div>
<div class="r" style="left:0;top:849px;width:1600px;height:36px;background:linear-gradient(to bottom, rgba(255,255,255,0.45) 0%, rgba(255,255,255,1) 100%)"></div>
</body></html>
